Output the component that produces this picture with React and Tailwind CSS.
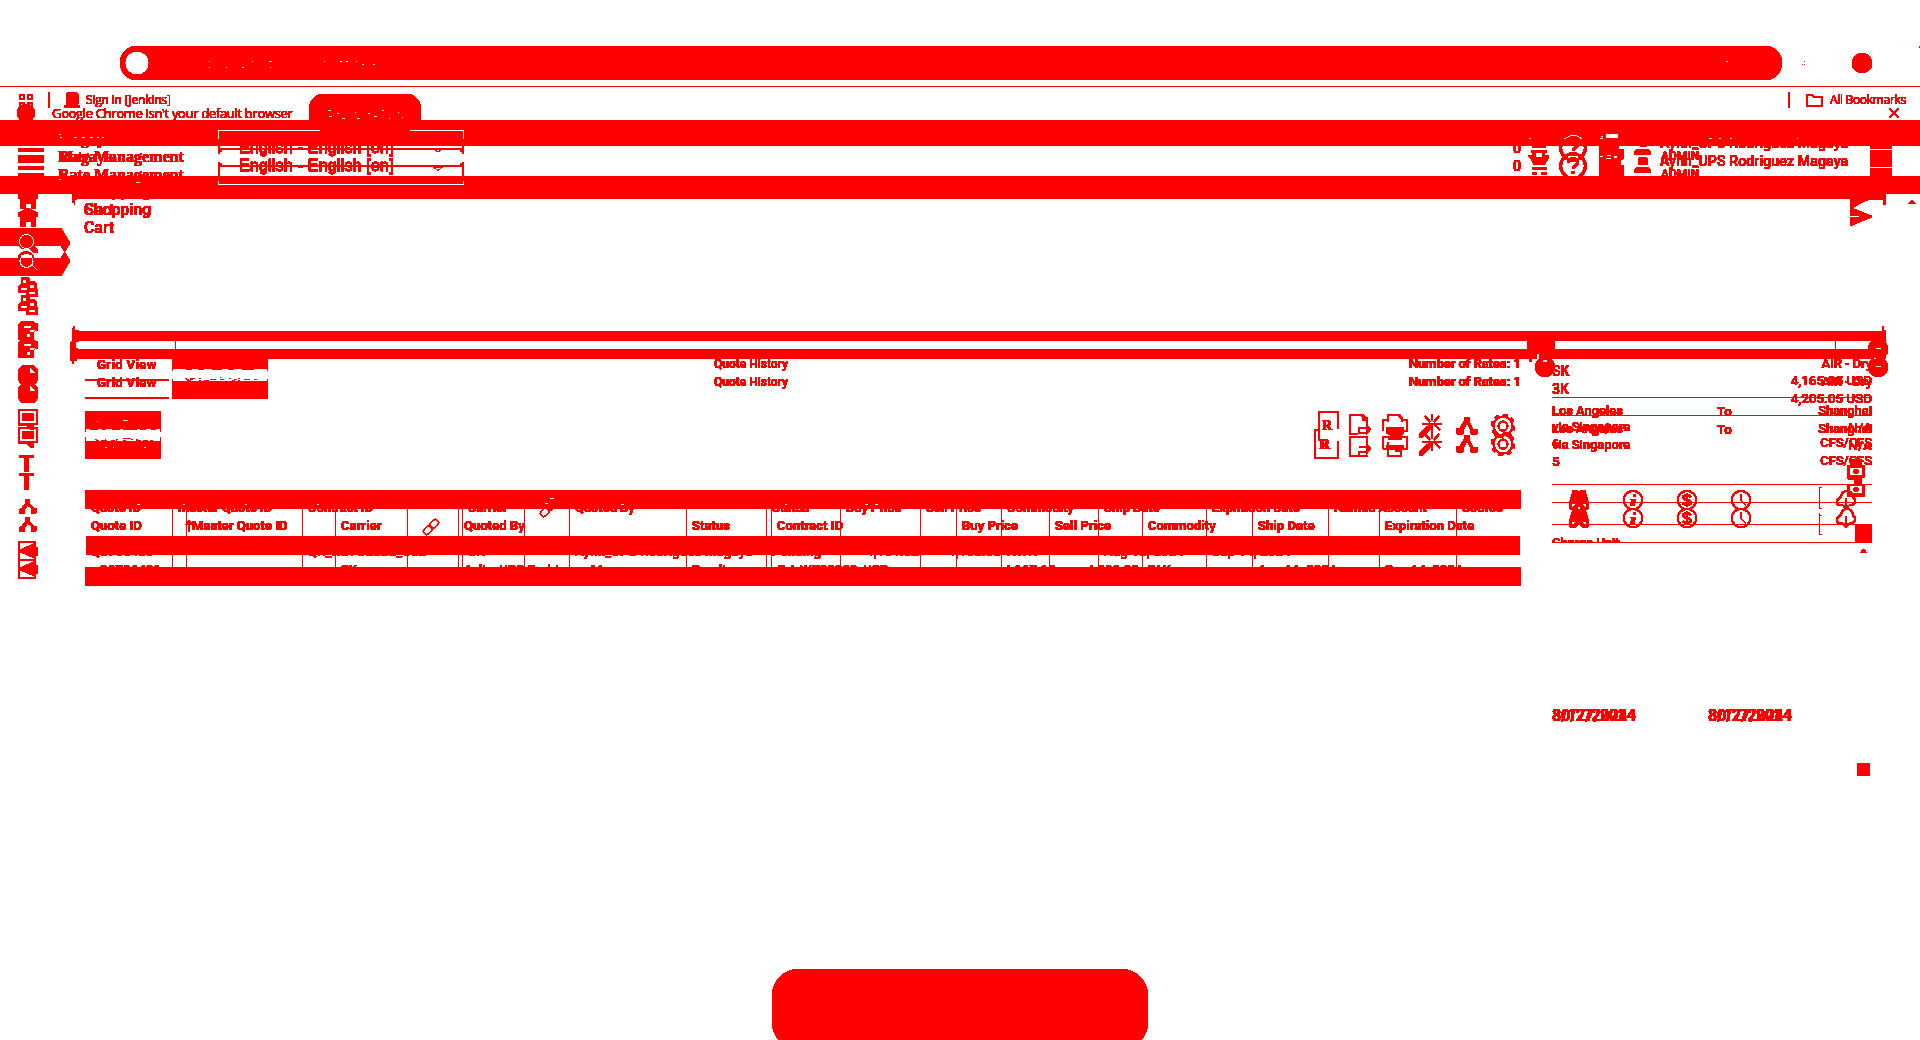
import React from "react";

const cell = "col-start-1 row-start-1";

/* All children share one grid cell, so they can overlap inside the flow. */
function Stack({ className = "", children }) {
  return (
    <div className={"grid grid-cols-1 grid-rows-1 items-start justify-items-start shrink-0 " + className}>
      {children}
    </div>
  );
}

function T({ className = "", children }) {
  return <span className={cell + " block whitespace-nowrap leading-[16px] " + className}>{children}</span>;
}

/* A drawing and its copy one step (18px) lower. */
function Twice({ w, h, className = "", children }) {
  return (
    <svg width={w} height={h} viewBox={"0 0 " + w + " " + h} fill="red" className={"block shrink-0 " + className}>
      <g>{children}</g>
      <g transform="translate(0 18)">{children}</g>
    </svg>
  );
}

function Specks({ w, h, points, className = "" }) {
  return (
    <svg width={w} height={h} fill="white" className={"block " + className} shapeRendering="crispEdges">
      {points.map(([x, y, n], i) => (
        <rect key={i} x={x} y={y} width={n || 1} height="1" />
      ))}
    </svg>
  );
}

function Toolbar() {
  return (
    <div className="flex h-[86px] shrink-0 items-start pt-[46px] pl-[120px]">
      <div className="flex h-[34px] w-[1662px] items-center rounded-full bg-[red] pl-[5px]">
        <div className="size-[24px] rounded-full bg-white" />
        <Specks w={1600} h={34} points={[[60, 15], [60, 21], [77, 21], [103, 15], [93, 21, 2], [120, 15, 3], [121, 21], [175, 15], [191, 15, 2], [197, 15, 2], [207, 15], [213, 18, 2], [224, 18, 2], [1577, 15, 2]]} />
      </div>
      <svg width="70" height="34" className="block" fill="red">
        <path d="M20 18h1v1h-1zM22 18h1v1h-1zM22 15h1v1h-1z" />
      </svg>
      <div className="mt-[7px] size-[20px] rounded-full bg-[red]" />
      <div className="ml-[47px] h-[2px] w-px bg-[red]" />
    </div>
  );
}

function Bookmarks() {
  return (
    <Stack className="h-[33px] overflow-hidden font-['Open_Sans',sans-serif] font-medium">
      <div className={cell + " flex h-[26px] w-[1920px] items-center"}>
        <svg width="14" height="16" className="ml-[19px] mt-[4px] block" fill="none" stroke="red" strokeWidth="2">
          <path d="M1 1h4v4H1zM9 1h4v4H9zM1 9h4v6H1zM9 9h4v6H9z" />
        </svg>
        <div className="ml-[15px] h-[16px] w-[2px] bg-[red]" />
        <svg width="16" height="16" viewBox="0 0 16 16" className="ml-[14px] block" fill="red">
          <path d="M4 0h8l3 3v7l-2 3 3 1v2H0v-2l3-1-1-4V3z" />
        </svg>
        <span className="ml-[6px] text-[12px] leading-[16px] tracking-[-0.015em]">Sign in [Jenkins]</span>
        <div className="ml-auto h-[16px] w-[2px] bg-[red]" />
        <svg width="17" height="13" className="ml-[16px] block" fill="none" stroke="red" strokeWidth="2" shapeRendering="crispEdges">
          <path d="M1 1h5l2 2h8v9H1z" />
        </svg>
        <span className="mr-[14px] ml-[7px] text-[12px] leading-[16px] tracking-[-0.025em]">All Bookmarks</span>
      </div>
      <div className={cell + " mt-[7px] flex h-[38px] w-[1920px] items-center"}>
        <div className="ml-[17px] size-[18px] rounded-full bg-[red]" />
        <span className="ml-[17px] w-[241px] whitespace-nowrap text-[13px] leading-[16px] tracking-[-0.025em]">Google Chrome isn't your default browser</span>
        <div className="ml-[16px] h-[38px] w-[112px] rounded-[15px] bg-[red]">
          <Specks w={112} h={38} points={[[19, 16, 3], [20, 22, 3], [28, 19, 2], [33, 24, 3], [46, 18], [48, 24, 3], [59, 19, 2], [65, 22, 3], [73, 16, 2], [80, 24], [89, 18], [93, 23]]} />
        </div>
        <svg width="10" height="10" className="mr-[21px] ml-auto block" stroke="red" strokeWidth="1.2">
          <path d="M0 0l10 10M10 0L0 10" />
        </svg>
      </div>
    </Stack>
  );
}

function BandTop() {
  return (
    <div className="h-[26px] shrink-0 bg-[red]">
      <svg width="1920" height="26" className="block" fill="none" stroke="white" shapeRendering="crispEdges">
        <path d="M320 10.500H218.500V19M410 10.500H463.500V19M59 14.500h2M60 17.500h2M74 17.500h3M82 17.500h3M90 17.500h3M97 17.500h2M102 17.500h2M1529 18.500h2M1709 18.500h3M1719 18.500h2M1730 18.500h2M1797 18.500h1" />
        <path d="M1564 18.500h2M1566 17.500h2M1568 16.500h2M1570 15.500h7M1577 16.500h2M1579 17.500h2M1580 18.500h2M1600 18.500h3M1601 16.500h2" strokeWidth="1" />
        <path d="M1606 16h12" strokeWidth="4" />
      </svg>
    </div>
  );
}

const helpIcon = (
  <g fill="none" stroke="red" strokeWidth="2.500">
    <circle cx="14" cy="14" r="12.300" />
    <path d="M9.500 11c0-6 9-6 9-.5 0 3-4 3-4 6.500M14 19v3" />
  </g>
);

function HeaderRows() {
  return (
    <Stack className="h-[30px] overflow-hidden">
      <svg width="26" height="30" className={cell + " ml-[18px] block"} fill="red">
        <path d="M0 2h26v4H0zM0 9h26v8H0zM0 20h26v4H0zM0 27h26v3H0z" />
      </svg>
      <div className={cell + " ml-[58px] mt-[-16px] font-['Liberation_Serif',serif] text-[16px] font-bold leading-[18px]"}>
        <p>Magaya</p>
        <p>Magaya</p>
      </div>
      <div className={cell + " ml-[58px] mt-[2px] whitespace-nowrap font-['Liberation_Serif',serif] text-[16px] font-bold leading-[18px]"}>
        <p>Rate Management</p>
        <p>Rate Management</p>
      </div>
      <svg width="246" height="30" className={cell + " ml-[218px] block"} fill="none" stroke="red" strokeWidth="2" shapeRendering="crispEdges">
        <path d="M1 0v8M1 3h244M245 0v8M1 16v14M1 20h244M245 16v14M1 5h3M242 5h3M1 18h3M242 18h3" />
        <path d="M215 2.500h10l-5 3.500zM216 21.500h8l-4 3z" strokeWidth="1" />
      </svg>
      <T className="ml-[239px] mt-[-6px] font-['Liberation_Sans',sans-serif] text-[16px] tracking-[0.013em] [-webkit-text-stroke:0.3px_red]">English - English [en]</T>
      <T className="ml-[239px] mt-[12px] font-['Liberation_Sans',sans-serif] text-[16px] tracking-[0.013em] [-webkit-text-stroke:0.3px_red]">English - English [en]</T>

      <T className="ml-[1513px] mt-[-6px] text-[14px] font-bold">0</T>
      <T className="ml-[1513px] mt-[12px] text-[14px] font-bold">0</T>
      <svg width="22" height="30" className={cell + " ml-[1528px] block"} fill="red">
        <path d="M4 0h14v2H4zM3 4h16v3H3zM0 9h4l1-2h3v4h6V7h3v2h4l-1 4-4 6H6L3 13zM4 21h15v3H4zM4 26h5v3H4zM13 26h6v3h-6z" />
      </svg>
      <Twice w={28} h={48} className={cell + " ml-[1559px] mt-[-12px]"}>{helpIcon}</Twice>
      <svg width="25" height="30" className={cell + " ml-[1599px] block"} fill="red">
        <path d="M0 0h20v3h5v9l-3 2v5h3v11H0z" />
        <path d="M1 10h3v1H1zM8 9h4v1H8zM7 12h5v1H7zM15 10h3v2h-3z" fill="white" />
      </svg>
      <svg width="18" height="30" className={cell + " ml-[1634px] block"} fill="red">
        <path d="M6 0h7v1H6zM4 3h10l3 3v3H0V6zM6 11h6l2 2v5l-2 1H6l-2-1v-5zM4 21h10l3 3v3H0v-3z" />
      </svg>
      <T className="ml-[1660px] mt-[-11px] text-[14px] font-medium tracking-[0.012em]">Aynn_UPS Rodriguez Magaya</T>
      <T className="ml-[1660px] mt-[7px] text-[14px] font-medium tracking-[0.012em]">Aynn_UPS Rodriguez Magaya</T>
      <T className="ml-[1661px] mt-[2px] text-[12px] font-medium">ADMIN</T>
      <T className="ml-[1661px] mt-[20px] text-[12px] font-medium">ADMIN</T>
      <svg width="22" height="30" className={cell + " ml-[1870px] block"} fill="red" shapeRendering="crispEdges">
        <path d="M0 0h22v3H0zM0 4h22v17H0zM0 22h22v8H0z" />
      </svg>
    </Stack>
  );
}

function BandBottom() {
  return (
    <div className="h-[18px] shrink-0 bg-[red]">
      <svg width="1920" height="18" className="block" fill="none" stroke="white" shapeRendering="crispEdges">
        <path d="M218.500 5v3.500H463.500V5M59 3.500h2M136 6.500h4" />
      </svg>
    </div>
  );
}

function Sidebar() {
  return (
    <aside className="flex w-[70px] shrink-0 flex-col">
      <Twice w={20} h={34} className="ml-[18px]">
        <path d="M0 1 10-4 20 1V5h-2v10h-5v-5H8v5H2V5H0z" />
      </Twice>
      <svg width="70" height="48" viewBox="0 0 70 48" className="block" fill="red">
        <path fillRule="evenodd" d="M0 0H61L70 15 61 30H0zM0 18H61L70 33 61 48H0z" />
        <path d="M19 18h15l4 4v3h-4l-4-4h-8z" />
        <path d="M18 31c0-10 16-10 16 0l-1 4-3 4h-8l-4-5z" />
        <circle cx="26.500" cy="13.500" r="7" fill="red" stroke="white" strokeWidth="2" />
        <circle cx="26.500" cy="33" r="6.500" fill="none" stroke="white" strokeWidth="2.200" />
        <path d="M31 36l6 6" stroke="white" strokeWidth="2.200" />
        <path d="M21 27h11v3H21z" fill="white" />
      </svg>
      <Twice w={20} h={39} className="ml-[18px] mt-[1px]">
        <path fillRule="evenodd" d="M3 0h7l2 3v2l3-1 4 3v5l1 3v5H8v-4H0v-6l3-3zM5 3v3h3V3zM12 8v3h4V8zM3 11v2h6v-2zM11 15v2h6v-2z" />
      </Twice>
      <Twice w={20} h={38} className="ml-[18px] mt-[5px]">
        <path fillRule="evenodd" d="M4 0h10l3 2h3v8h-4v9H0V4zM6 4v3h7V5zM12 9h5v2h-5zM9 13h3v3H9z" />
      </Twice>
      <Twice w={20} h={38} className="ml-[18px] mt-[6px]">
        <path fillRule="evenodd" d="M5 0h10l5 5v10l-4 5H4l-4-5V5zM12 2v6h6z" />
      </Twice>
      <Twice w={20} h={39} className="ml-[18px] mt-[6px]">
        <path fillRule="evenodd" d="M0 0h20v16h-4v5h-3l-4-4H0zM2 2v12h16V2zM4 4h12v8H4z" />
      </Twice>
      <Twice w={20} h={36} className="ml-[18px] mt-[7px]">
        <path d="M1 0h15v3h-5v14H6V3H1z" />
      </Twice>
      <Twice w={20} h={36} className="ml-[18px] mt-[8px]">
        <path d="M7 0h5v5l4 4 3 1v3l-2 2h-4V9L9.500 6 7 10v4l-2 1H1v-4l3-2 3-4z" />
      </Twice>
      <Twice w={20} h={38} className="ml-[18px] mt-[6px]">
        <path fillRule="evenodd" d="M0 0h18v6h2v9h-2v5H0zM2 2v7l13-6V2zM2 11v7h14v-1z" />
      </Twice>
    </aside>
  );
}

function CartPanel() {
  return (
    <Stack className="h-[132px]">
      <div className={cell + " ml-[2px] h-[5px] w-[1787px] bg-[red]"} />
      <svg width="5" height="12" className={cell + " ml-[2px] block"} fill="red">
        <path d="M0 0h5v6H3v5H2V9H0z" />
      </svg>
      <div className={cell + " ml-[14px] mt-[-11px] text-[16px] font-medium leading-[18px] tracking-[-0.005em]"}>
        <p>Shopping</p>
        <p>Shopping</p>
        <p>Cart</p>
      </div>
      <p className={cell + " ml-[14px] mt-[7px] text-[16px] font-medium leading-[18px]"}>Cart</p>
      <svg width="40" height="36" className={cell + " ml-[1780px] block"} fill="red">
        <path d="M0 5h18L4 13v2l18 7v1L0 32v-9h9v-1H0zM9 0h27v11h-2l-1-5H18L9 8z" />
      </svg>
      <svg width="8" height="4" className={cell + " ml-[1838px] mt-[6px] block"} fill="red">
        <path d="M0 4 4 0 8 4z" />
      </svg>
    </Stack>
  );
}

function DividerBars() {
  return (
    <Stack className="h-[28px]">
      <div className={cell + " ml-[2px] flex w-[1814px] flex-col gap-[8px] pt-[5px]"}>
        <div className="h-[10px] bg-[red]" />
        <div className="h-[10px] bg-[red]" />
      </div>
      <svg width="10" height="40" className={cell + " block"} fill="red">
        <path d="M2 2h1V0h2v4h4v12H6v6h2v6H7v7H4v3H2v-3H0V18l2-3z" />
      </svg>
      <div className={cell + " ml-[105px] mt-[15px] h-[8px] w-px bg-[red]"} />
      <div className={cell + " ml-[1765px] mt-[15px] h-[8px] w-px bg-[red]"} />
      <svg width="30" height="54" className={cell + " ml-[1457px] mt-0 block"} fill="red">
        <path d="M0 12h28v6l-4 12H14V28H4l1 8H3l-1-4H0z" />
        <circle cx="18" cy="22.500" r="10" />
        <circle cx="18" cy="41" r="9.800" />
        <path d="M16 34h4v2h-4zM10 28h2v5h-2z" fill="white" />
      </svg>
      <svg width="22" height="54" className={cell + " ml-[1797px] block"} fill="red">
        <path d="M16 0h1v4h2v14H4V5h11z" />
        <circle cx="11" cy="23" r="10" />
        <circle cx="11" cy="41" r="9.800" />
        <path d="M9 22h5v1H9zM9 40h5v1H9zM7 32h2v1H7z" fill="white" />
      </svg>
    </Stack>
  );
}

function Tabs() {
  return (
    <Stack className="h-[52px]">
      <T className="ml-[27px] mt-[-2px] text-[13px] font-bold tracking-[0.03em]">Grid View</T>
      <T className="ml-[27px] mt-[16px] text-[13px] font-bold tracking-[0.03em]">Grid View</T>
      <div className={cell + " ml-[15px] flex w-[84px] flex-col gap-[16px] pt-[20px]"}>
        <div className="h-[2px] bg-[red]" />
        <div className="h-[2px] bg-[red]" />
      </div>
      <div className={cell + " ml-[102px] flex w-[96px] flex-col gap-[12px]"}>
        <div className="h-[10px] bg-[red]" />
        <div className="h-[18px] bg-[red]" />
      </div>
      <svg width="96" height="24" className={cell + " ml-[102px] block"} fill="none" stroke="red" shapeRendering="crispEdges">
        <path d="M.5 10v2M95.500 10v2M.5 20v2M95.500 20v2M14 10.500h6M26 10.500h6M40 10.500h10M56 10.500h6M70 10.500h12M13 19.500h2M18 19.500h5M14 20.500h3M18 20.500h3M15 21.500h4M27 19.500h2M27 21.500h2M32 21.500h5M38 20.500h6M48 18.500h1M48 20.500h4M57 19.500h2M60 21.500h3M62 20.500h3M66 19.500h2M66 21.500h2M72 20.500h6M82 20.500h3" strokeWidth="1" />
      </svg>
      <T className="ml-[644px] mt-[-3px] text-[12px] font-medium">Quote History</T>
      <T className="ml-[644px] mt-[15px] text-[12px] font-medium">Quote History</T>
      <T className="ml-[1339px] mt-[-3px] text-[13px] font-bold tracking-[-0.006em]">Number of Rates: 1</T>
      <T className="ml-[1339px] mt-[15px] text-[13px] font-bold tracking-[-0.006em]">Number of Rates: 1</T>
    </Stack>
  );
}

function ActionIcons() {
  return (
    <div className="flex items-start">
      <svg width="25" height="48" className="block font-['Liberation_Serif',serif] font-bold" fill="red">
        <path d="M5 18V1h19v17M1 47V19h4v10h9M24 30v17H0" fill="none" stroke="red" strokeWidth="2" />
        <text x="8" y="19" fontSize="14">R</text>
        <text x="6" y="38" fontSize="14">R</text>
        <text x="5" y="38" fontSize="14">R</text>
      </svg>
      <svg width="22" height="46" className="ml-[10px] block" fill="none" stroke="red" strokeWidth="2">
        <path d="M9 23H1V4h12l5 4v7M10 17h8v5h-8zM9 45H1V26h17V35M10 36h8v5h-8v4h9" />
        <path d="M13 4l6 6h-6zM17 14l5 4-5 6zM17 33l5 4-5 7z" fill="red" stroke="none" />
      </svg>
      <svg width="26" height="46" className="ml-[11px] block" fill="none" stroke="red" strokeWidth="2">
        <path d="M6 11V4h11l3 4v3M1 20V9h5M20 9h5v11h-4M1 38V26h24V38h-4M1 38h5M6 31v14h13V37M6 28h14" />
        <path d="M4 16h18v6l-4 3H10l-6-3zM4 34h18v5H4zM13 38h6v3h-6z" fill="red" stroke="none" />
      </svg>
      <Twice w={24} h={46} className="ml-[11px]">
        <path d="M0 23 11 13l3 2L3 27H0z" />
        <path d="M13 3v7M13 15v7M3 13h20M6 5l5 6M20 5l-5 6M16 14l5 5" stroke="red" strokeWidth="1.500" />
      </Twice>
      <Twice w={22} h={46} className="ml-[13px]">
        <path d="M8 6h6v4h-1l4 8h5v4l-2 2h-4l-2-3 0-3-3-6-3 6v3l-2 3H2l-2-3v-3l3-1h1l4-7z" />
      </Twice>
      <Twice w={26} h={46} className="ml-[12px]">
        <g fill="none" stroke="red">
          <circle cx="13" cy="15" r="9.500" strokeWidth="1.400" />
          <circle cx="13" cy="15" r="11" strokeWidth="2" strokeDasharray="4 4.640" />
          <circle cx="13" cy="15" r="4.500" strokeWidth="1.300" />
        </g>
      </Twice>
    </div>
  );
}

function FilterRow() {
  return (
    <div className="flex h-[79px] items-start pl-[15px]">
      <Stack>
        <div className={cell + " flex w-[76px] flex-col gap-[12px]"}>
          <div className="h-[18px] rounded-t-[1px] bg-[red]" />
          <div className="h-[18px] rounded-b-[1px] bg-[red]" />
        </div>
        <svg width="76" height="48" className={cell + " block"} fill="none" stroke="red" shapeRendering="crispEdges">
          <path d="M.5 18v3M75.500 18v3M.5 26v4M75.500 26v4M5 18.500h8M17 18.500h4M27 18.500h8M38 18.500h14M55 18.500h6M66 18.500h5M11 29.500h3M10 28.500h2M16 29.500h6M20 28.500h1M26 29.500h4M31 28.500h2M31 29.500h1M38 27.500h8M38 29.500h3M46 28.500h2M51 28.500h2M51 29.500h5M58 29.500h5M65 29.500h3" />
          <path d="M12 10.500h1M38 9.500h5M20 36.500h2M28 36.500h1M59 36.500h2" stroke="white" />
        </svg>
      </Stack>
      <div className="ml-[1153px]">
        <ActionIcons />
      </div>
    </div>
  );
}

const gridA = "grid-cols-[87px_130px_160px_62px_45px_197px_74px_80px_81px_97px_108px_122px_128px_65px]";
const gridB = "grid-cols-[101px_149px_72px_51px_228px_85px_185px_93px_93px_110px_127px_142px]";

function Row({ cols, cells, className = "" }) {
  return (
    <div className={cell + " grid h-full w-[1436px] whitespace-nowrap leading-[16px] " + cols}>
      {cells.map((c, i) => (
        <div key={i} className={i === 0 ? "min-w-0 pl-[6px]" : "min-w-0 border-l border-[red] pl-[5px]"}>
          <div className={className}>{c}</div>
        </div>
      ))}
    </div>
  );
}

const Link = (
  <svg width="18" height="18" viewBox="0 0 18 18" className="ml-[9px] block" fill="none" stroke="red" strokeWidth="0.900">
    <rect x="7" y="3" width="10" height="6" rx="3" transform="rotate(-45 12 6)" />
    <rect x="1" y="9" width="10" height="6" rx="3" transform="rotate(-45 6 12)" />
  </svg>
);

const headA = ["Quote ID", "Master Quote ID", "Contract ID", "Carrier", Link, "Quoted By", "Status", "Buy Price", "Sell Price", "Commodity", "Ship Date", "Expiration Date", "Named Account", "Source"];
const headB = [
  "Quote ID",
  <span className="-ml-[7px] flex items-center">
    <svg width="7" height="12" fill="red" className="block"><path d="M4 0 8 5H5v7H3V5H0z" /></svg>
    Master Quote ID
  </span>,
  "Carrier", Link, "Quoted By", "Status", "Contract ID", "Buy Price", "Sell Price", "Commodity", "Ship Date", "Expiration Date",
];
const rowA = ["Q0706430", "", "QR_RSTO2022_USD", "SK", "", "Aynn_UPS Rodriguez Magaya", "Pending", <span className="ml-[20px]">4,164.02</span>, <span className="ml-[22px]">4,165.05</span>, "HWK", "Aug 15, 2024", "Sep 14, 2024", "", ""];
const rowB = [<span className="ml-[8px]">Q0706431</span>, "", "SK", "", "Aylin_UPS Rodriguez Magaya", "Pending", "Gri_WT02023_USD", <span className="ml-[42px]">4,167.13</span>, <span className="ml-[32px]">4,202.05</span>, "FAK", "Aug 16, 2024", "Sep 14, 2024"];

function QuoteTable() {
  return (
    <div className="ml-[15px] w-[1436px] text-[13px] font-bold tracking-[-0.005em]">
      <div className="h-[19px] bg-[red]">
        <Specks w={1436} h={19} points={[[52, 14, 3], [98, 14, 2], [160, 14, 2], [232, 14, 2], [465, 8, 4], [460, 13, 3], [536, 14, 3], [700, 14, 2], [780, 14, 3], [790, 14, 3]]} />
      </div>
      <Stack className="h-[27px] overflow-hidden">
        <Row cols={gridA} cells={headA} className="-mt-[9px]" />
        <Row cols={gridB} cells={headB} className="mt-[9px] tracking-[0.003em]" />
      </Stack>
      <div className="mx-px h-[19px] bg-[red]" />
      <Stack className="h-[12px] overflow-hidden">
        <Row cols={gridA} cells={rowA} className="-mt-[11px] font-medium tracking-[0.02em]" />
        <Row cols={gridB} cells={rowB} className="mt-[7px] font-medium tracking-[0.01em]" />
      </Stack>
      <div className="h-[19px] bg-[red]" />
    </div>
  );
}

function RightLines({ className }) {
  return <div className={cell + " h-px w-[320px] bg-[red] " + className} />;
}

function RatePanel() {
  return (
    <Stack className="-ml-[1px] h-[470px] w-[320px] text-[13.5px] font-medium tracking-[-0.004em]">
      <T className="mt-[4px] text-[14px]">SK</T>
      <T className="mt-[22px] text-[14px]">3K</T>
      <T className="justify-self-end mt-[-3px] text-[13px]">AIR - Dry</T>
      <T className="justify-self-end mt-[15px] text-[13px]">AIR - Dry</T>
      <T className="justify-self-end mt-[13px]">4,165.05 USD</T>
      <T className="justify-self-end mt-[31px]">4,205.05 USD</T>
      <RightLines className="mt-[38px]" />
      <RightLines className="mt-[56px]" />
      <T className="mt-[44px] text-[13px]">Los Angeles</T>
      <T className="mt-[62px] text-[13px]">Los Angeles</T>
      <T className="ml-[165px] mt-[44px]">To</T>
      <T className="ml-[165px] mt-[62px]">To</T>
      <T className="justify-self-end mt-[44px] text-[13px]">Shanghai</T>
      <T className="justify-self-end mt-[62px] text-[13px]">Shanghai</T>
      <T className="mt-[60px] text-[13px]">via Singapore</T>
      <T className="mt-[78px] text-[13px]">via Singapore</T>
      <T className="justify-self-end mt-[60px]">N/A</T>
      <T className="justify-self-end mt-[78px]">N/A</T>
      <T className="mt-[76px]">6</T>
      <T className="mt-[94px]">5</T>
      <T className="justify-self-end mt-[76px] text-[13px]">CFS/CFS</T>
      <T className="justify-self-end mt-[94px] text-[13px]">CFS/CFS</T>
      <svg width="18" height="41" viewBox="0 0 18 41" className={cell + " ml-[295px] mt-[100px] block"} fill="red">
        <path fillRule="evenodd" d="M3 0h12v6h3v13h-3v6h3v13H0V25h7v-4H3l-3-2V6h3zM3 9v7h12V9zM3 27v7h12v-7z" />
        <circle cx="9" cy="12.500" r="2.500" />
        <circle cx="9" cy="30.500" r="2.500" />
      </svg>
      <RightLines className="mt-[125px]" />
      <RightLines className="mt-[143px]" />
      <RightLines className="mt-[165px]" />
      <RightLines className="mt-[183px]" />
      <div className={cell + " ml-[17px] mt-[131px] flex gap-[34px]"}>
        <Twice w={20} h={38}>
          <path fillRule="evenodd" d="M4 0h4l2 2 2-2h4l4 14v4l-2 2h-4l-4-4-4 4H2l-2-2v-4zM3 14l4 0-3 4-2-1zM13 14h4l1 3-2 1z" />
        </Twice>
        <Twice w={20} h={38}>
          <circle cx="10" cy="10" r="9.200" fill="none" stroke="red" strokeWidth="1.200" />
          <path d="M10 4h3v3h-3zM7 9h6l-2 6h1v1H7l2-6H7z" />
        </Twice>
        <Twice w={20} h={38}>
          <circle cx="10" cy="10" r="9.200" fill="none" stroke="red" strokeWidth="1.200" />
          <path d="M10 3v14M14 7q-4-3-7-1t3 4 3 4-7-.5" fill="none" stroke="red" strokeWidth="2" />
        </Twice>
        <Twice w={20} h={38}>
          <circle cx="10" cy="10" r="9.200" fill="none" stroke="red" strokeWidth="1.200" />
          <path d="M10 4v7l5 4" fill="none" stroke="red" strokeWidth="1" />
        </Twice>
      </div>
      <svg width="5" height="50" className={cell + " ml-[266px] mt-[128px] block"} fill="none" stroke="red" strokeWidth="1" shapeRendering="crispEdges">
        <path d="M4 .5H1.500V21.500H4M1.500 26v21.500H4M1 28.500h3" />
      </svg>
      <Twice w={20} h={38} className={cell + " ml-[284px] mt-[131px]"}>
        <path d="M7 15H2q-2-3 0-6l3-2q1-6 6-6t6 6l2 3q1 4-3 5h-3" fill="none" stroke="red" strokeWidth="1.600" />
        <path d="M9 8h2v7h3l-4 5-4-5h3z" />
      </Twice>
      <div className={cell + " ml-[303px] mt-[165px] h-[18px] w-[17px] bg-[red]"} />
      <div className={cell + " mt-[176px] h-[8px] overflow-hidden whitespace-nowrap text-[13px] leading-[16px]"}>Charge Unit</div>
      <svg width="7" height="4" className={cell + " ml-[308px] mt-[190px] block"} fill="red">
        <path d="M0 4 3.500 0 7 4z" />
      </svg>
      <div className={cell + " mt-[349px] flex gap-[156px] text-[16px] leading-[16px]"}>
        {[0, 1].map((n) => (
          <Stack key={n} className="w-0">
            <T className="font-bold">8/17/2024</T>
            <T className="font-bold tracking-[-0.01em]">30/27/2024</T>
          </Stack>
        ))}
      </div>
      <div className={cell + " ml-[305px] mt-[404px] size-[13px] bg-[red]"} />
    </Stack>
  );
}

export default function App() {
  return (
    <div className="flex h-[1040px] w-[1920px] flex-col overflow-hidden bg-white font-['Roboto',sans-serif] text-[red] brightness-[0.515] contrast-[150]">
      <Toolbar />
      <div className="h-px shrink-0 bg-[red]" />
      <Bookmarks />
      <BandTop />
      <HeaderRows />
      <BandBottom />
      <div className="flex h-[775px] shrink-0">
        <Sidebar />
        <main className="flex w-[1850px] shrink-0 flex-col">
          <CartPanel />
          <DividerBars />
          <div className="mt-[5px] flex h-[610px] shrink-0">
            <div className="w-[1483px] shrink-0">
              <Tabs />
              <FilterRow />
              <QuoteTable />
            </div>
            <RatePanel />
          </div>
        </main>
      </div>
      <div className="h-[80px] w-[376px] shrink-0 self-center rounded-[27px] bg-[red]" />
    </div>
  );
}
